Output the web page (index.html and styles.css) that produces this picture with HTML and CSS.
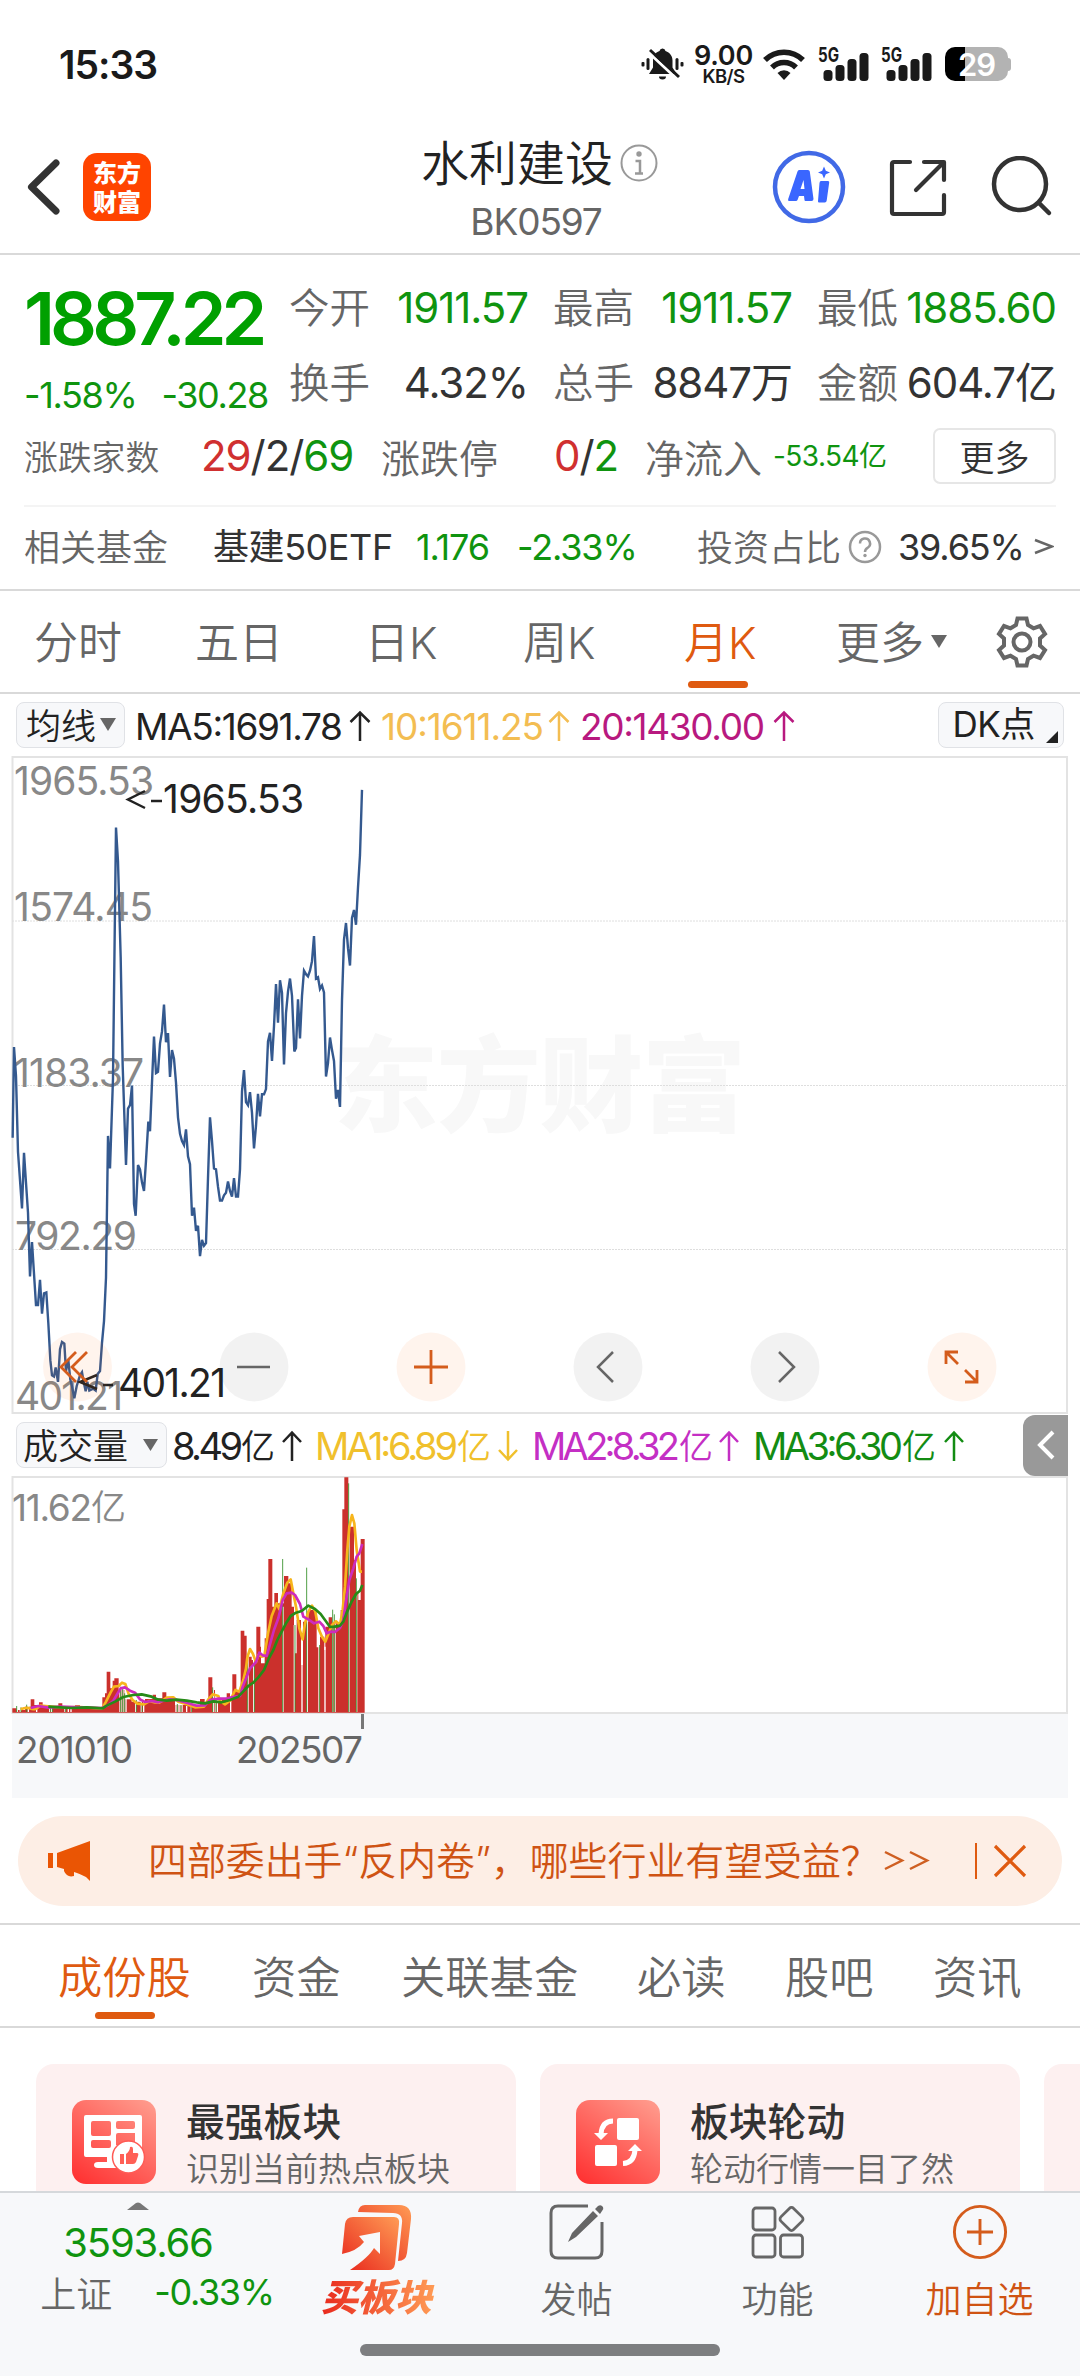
FILE: index.html
```html
<!DOCTYPE html>
<html lang="zh-CN">
<head>
<meta charset="utf-8">
<title>水利建设 BK0597</title>
<link rel="stylesheet" href="styles.css">
</head>
<body>
<div class="statusbar">
  <div class="clock n">15:33</div>
  <svg class="bell" width="43" height="34" viewBox="0 0 43 34"><g fill="#1a1a1a"><path d="M21.500 1.500a3 3 0 0 1 3 2.500c4.500 1.500 7 5 7 9.500v7l4 6.500H8l4-6.500v-7c0-4.500 2-8 6.500-9.500a3 3 0 0 1 3-2.500z"/><path d="M18 29.500h7a3.500 3 0 0 1-7 0z"/><rect x="0.500" y="15" width="3" height="4.500" rx="1"/><rect x="5.500" y="11" width="3" height="12" rx="1.500"/><rect x="34.500" y="11" width="3" height="12" rx="1.500"/><rect x="39.500" y="15" width="3" height="4.500" rx="1"/></g><path d="M7 5L36 32" stroke="#fff" stroke-width="3"/><path d="M9 3L38 30" stroke="#1a1a1a" stroke-width="3"/></svg>
  <div class="speed n"><b>9.00</b><i>KB/S</i></div>
  <svg class="wifi" width="42" height="32" viewBox="0 0 42 32"><g fill="none" stroke="#1a1a1a" stroke-width="5.500"><path d="M2 12a27 27 0 0 1 38 0"/><path d="M9 19.500a17 17 0 0 1 24 0"/></g><path d="M14.500 25a9 9 0 0 1 13 0L21 32z" fill="#1a1a1a"/></svg>
  <svg class="sig" width="52" height="40" viewBox="0 -4 52 40"><text x="1" y="16" class="g5" textLength="21" lengthAdjust="spacingAndGlyphs">5G</text><g fill="#1a1a1a"><rect x="6.500" y="24" width="9" height="11" rx="3.500"/><rect x="18.500" y="19" width="9" height="16" rx="3.500"/><rect x="30.500" y="13" width="9" height="22" rx="3.500"/><rect x="42.500" y="7" width="9" height="28" rx="3.500"/></g></svg>
  <svg class="sig" width="52" height="40" viewBox="0 -4 52 40"><text x="1" y="16" class="g5" textLength="21" lengthAdjust="spacingAndGlyphs">5G</text><g fill="#1a1a1a"><rect x="6.500" y="24" width="9" height="11" rx="3.500"/><rect x="18.500" y="19" width="9" height="16" rx="3.500"/><rect x="30.500" y="13" width="9" height="22" rx="3.500"/><rect x="42.500" y="7" width="9" height="28" rx="3.500"/></g></svg>
  <div class="battery"><span class="cell n">29</span><span class="nub"></span></div>
</div>

<header class="header">
  <svg class="back" width="40" height="64" viewBox="0 0 40 64"><path d="M32 8L7.500 32 32 56" fill="none" stroke="#333" stroke-width="7" stroke-linecap="round" stroke-linejoin="round"/></svg>
  <div class="logo"><span>东方</span><span>财富</span></div>
  <div class="title">
    <div class="name"><span>水利建设</span>
      <svg width="38" height="38" viewBox="0 0 38 38"><circle cx="19" cy="19" r="17.500" fill="none" stroke="#999" stroke-width="2"/><circle cx="19" cy="10" r="2.700" fill="#999"/><path d="M15.500 17H20V29.500M15 29.500H23" fill="none" stroke="#999" stroke-width="2.500"/></svg>
    </div>
    <div class="code n">BK0597</div>
  </div>
  <svg class="ai" width="74" height="74" viewBox="0 0 74 74"><circle cx="37" cy="37" r="34" fill="none" stroke="#4169e6" stroke-width="4.500"/><path fill="#3a66ff" fill-rule="evenodd" d="M27 20h9q1.500 0 1.800 1.500L41.500 49q0 2-2 2h-6q-1 0-1-1l-.5-4h-5l-1.500 4q-.5 1-1.500 1h-7q-1.500 0-.8-2L25.500 21.500Q26 20 27 20zM31.500 30l-3 9h4z"/><path fill="#3a66ff" d="M49 31h7q1.500 0 1.200 1.500l-2.500 18q-.2 2-2 2h-5.500q-1.500 0-1.200-1.500l1.500-18q.2-2 1.500-2z"/><path fill="#3a66ff" d="M52 16.500l1.800 4.200 4.200 1.800-4.200 1.800L52 28.500l-1.800-4.200-4.200-1.800 4.200-1.800z"/></svg>
  <svg class="share" width="64" height="64" viewBox="0 0 64 64"><g fill="none" stroke="#333" stroke-width="4.200" stroke-linecap="round" stroke-linejoin="round"><path d="M24 6H8Q6 6 6 8V56Q6 58 8 58H56Q58 58 58 56V39"/><path d="M38 6H58V24M57 7L30 34"/></g></svg>
  <svg class="find" width="64" height="64" viewBox="0 0 64 64"><circle cx="30" cy="28" r="26" fill="none" stroke="#333" stroke-width="4.500"/><path d="M49 47L59 57" stroke="#333" stroke-width="4.500" stroke-linecap="round"/></svg>
</header>

<section class="quote">
  <div class="top">
    <div class="last">
      <div class="price n">1887.22</div>
      <div class="chg n"><span>-1.58%</span><span>-30.28</span></div>
    </div>
    <div class="stats">
      <span class="k">今开</span><span class="v n down">1911.57</span>
      <span class="k">最高</span><span class="v n down">1911.57</span>
      <span class="k">最低</span><span class="v n down">1885.60</span>
      <span class="k">换手</span><span class="v n">4.32%</span>
      <span class="k">总手</span><span class="v n">8847万</span>
      <span class="k">金额</span><span class="v n">604.7亿</span>
    </div>
  </div>
  <div class="breadth">
    <span class="small">涨跌家数</span>
    <span class="v n"><em class="up">29</em>/2/<em class="down">69</em></span>
    <span class="mid">涨跌停</span>
    <span class="v n"><em class="up">0</em>/<em class="down">2</em></span>
    <span class="mid">净流入</span>
    <span class="flow n down">-53.54亿</span>
    <button class="more">更多</button>
  </div>
  <div class="fund">
    <span class="fk">相关基金</span>
    <span class="etf n">基建50ETF</span>
    <span class="n down">1.176</span>
    <span class="n down">-2.33%</span>
    <span class="fk">投资占比</span>
    <svg width="34" height="34" viewBox="0 0 34 34"><circle cx="17" cy="17" r="15" fill="none" stroke="#999" stroke-width="2.500"/><path d="M12 13.500a5 5 0 1 1 7.500 4.300Q17 19.300 17 22" fill="none" stroke="#999" stroke-width="2.500"/><circle cx="17" cy="25.500" r="1.700" fill="#999"/></svg>
    <span class="n pct">39.65%</span>
    <svg width="20" height="20" viewBox="0 0 20 20"><path d="M1 3L18 9.500 1 16" fill="none" stroke="#666" stroke-width="2.500"/></svg>
  </div>
</section>

<nav class="periods">
  <span>分时</span><span>五日</span><span>日<b>K</b></span><span>周<b>K</b></span><span class="on">月<b>K</b></span>
  <span>更多</span>
  <svg class="caret" width="16" height="14" viewBox="0 0 16 14"><path d="M0 0H16L8 13z" fill="#666"/></svg>
  <svg class="gear" width="56" height="56" viewBox="0 0 56 56"><g fill="none" stroke="#666" stroke-width="4"><path stroke-linejoin="miter" d="M23.500 4.500h9l1.500 6.500 5.500 3.300 6.500-2.300 5 8-5 4.500v7l5 4.500-5 8-6.500-2.300-5.500 3.300-1.500 6.500h-9l-1.500-6.500-5.500-3.300L10 44l-5-8 5-4.500v-7L5 20l5-8 6.500 2.300 5.500-3.300z"/><circle cx="28" cy="28" r="8.500"/></g></svg>
</nav>

<div class="ma">
  <span class="pill"><span>均线</span><svg width="16" height="14" viewBox="0 0 16 14"><path d="M0 0H16L8 13z" fill="#666"/></svg></span>
  <svg width="700" height="60" viewBox="130 694 700 60"><g class="num" font-size="37">
    <text x="135" y="739" fill="#222" textLength="208">MA5:1691.78</text>
    <text x="381" y="739" fill="#f3bd52" textLength="163">10:1611.25</text>
    <text x="580" y="739" fill="#b8197f" textLength="185">20:1430.00</text></g>
    <g fill="none" stroke-width="2.500"><path d="M360 740V712M350.500 721L360 711.500 369.500 721" stroke="#222"/><path d="M559 740V712M549.500 721L559 711.500 568.500 721" stroke="#f3bd52"/><path d="M784 740V712M774.500 721L784 711.500 793.500 721" stroke="#b8197f"/></g>
  </svg>
  <span class="pill dk"><span class="n">DK点</span><svg width="12" height="44" viewBox="0 0 12 44"><path d="M12 28V40H0z" fill="#222"/></svg></span>
</div>

<div class="chart">
  <svg class="plot" width="1080" height="658" viewBox="0 756 1080 658">
    <text class="wm" x="334" y="1124" font-size="104" textLength="412">东方财富</text>
    <g fill="none" stroke="#e3e3e3"><rect x="12.500" y="757" width="1054.500" height="656" stroke-width="2"/><path d="M12 921H1067M12 1085.500H1067M12 1249.500H1067" stroke-width="1" stroke="#dedede" stroke-dasharray="2 1"/></g>
    <g class="num" font-size="39" fill="#888"><text x="14" y="795" textLength="140">1965.53</text><text x="14" y="921" textLength="139">1574.45</text><text x="14" y="1087" textLength="130">1183.37</text><text x="15" y="1250" textLength="122">792.29</text><text x="15" y="1410" textLength="108">401.21</text></g>
    <polyline transform="translate(0 740) scale(.33333 .43367)" vector-effect="non-scaling-stroke" fill="none" stroke="#34598f" stroke-width="2.400" points="38,917 42,708 48,775 54,950 66,1080 72,952 84,1090 90,1237 96,1158 108,1303 114,1303 120,1245 126,1323 132,1276 139,1274 145,1345 151,1430 156,1465 162,1468 167,1447 174,1480 180,1405 186,1388 193,1392 198,1455 205,1430 211,1475 216,1490 223,1518 230,1490 240,1465 246,1458 251,1480 257,1502 262,1480 268,1500 280,1496 287,1500 293,1462 300,1455 306,1390 312,1340 318,1240 324,913 330,988 339,780 345,390 348,202 354,280 362,500 368,750 378,980 384,850 390,842 396,797 402,1070 407,1097 414,980 420,990 426,1020 432,1040 438,970 445,880 450,902 456,790 462,684 468,768 474,765 480,700 486,672 492,610 498,697 504,676 510,777 516,715 522,735 528,790 534,870 540,908 546,925 552,934 558,898 564,960 570,978 576,1097 582,1078 588,1132 594,1120 600,1190 606,1153 612,1166 618,1160 624,1010 630,870 636,925 642,988 648,990 654,1030 660,1062 666,1062 672,1050 678,1044 684,1018 690,1040 696,1053 702,1010 708,1053 714,1053 720,990 726,810 732,761 738,835 744,842 750,812 756,860 762,942 768,890 774,816 780,868 786,817 792,817 798,805 804,695 810,675 816,740 822,660 828,563 834,652 840,554 846,583 852,748 858,630 864,580 870,550 876,590 883,718 888,710 894,598 900,688 906,590 912,532 918,540 924,545 930,532 936,510 942,452 948,550 954,547 960,574 966,566 972,582 978,776 984,745 990,686 996,715 1002,740 1008,827 1014,807 1020,846 1026,600 1032,460 1038,422 1044,480 1050,520 1056,410 1062,392 1068,426 1074,340 1080,265 1086,115"/>
    <g fill="none" stroke="#222" stroke-width="2.500"><path d="M145 791L128 799.500 145 808M151 801H162M97 1375L80 1382 97 1389M103 1385H113"/></g>
    <g class="num" font-size="39" fill="#222"><text x="163" y="813" textLength="141">1965.53</text><text x="118" y="1397" textLength="108">401.21</text></g>
    <g fill-opacity=".07"><circle cx="77.500" cy="1367" r="34.500" fill="#f60"/><circle cx="431" cy="1367" r="34.500" fill="#f60"/><circle cx="962" cy="1367" r="34.500" fill="#f60"/></g>
    <g fill-opacity=".05"><circle cx="254" cy="1367" r="34.500"/><circle cx="608" cy="1367" r="34.500"/><circle cx="785" cy="1367" r="34.500"/></g>
    <g fill="none" stroke="#d45c1c" stroke-width="2.800"><path d="M76 1352L61 1367 76 1382M87 1352L72 1367 87 1382M431 1350V1384M414 1367H448"/><path d="M946 1364V1352H958M947 1353L958 1364M965 1370L976 1381M977 1370V1382H965"/></g>
    <g fill="none" stroke="#666" stroke-width="2.500"><path d="M237 1367H270M613 1352L598 1367 613 1382M779 1352L794 1367 779 1382"/></g>
  </svg>
  <div class="volhead">
    <span class="pill vol"><span>成交量</span><svg width="15" height="13" viewBox="0 0 15 13"><path d="M0 0H15L7.500 12z" fill="#666"/></svg></span>
    <svg width="820" height="62" viewBox="170 1414 820 62"><g class="num" font-size="38">
      <text x="172" y="1460" fill="#222" textLength="71">8.49</text><text x="315" y="1460" fill="#f0c02c" textLength="143">MA1:6.89</text><text x="532" y="1460" fill="#c42fc4" textLength="148">MA2:8.32</text><text x="753" y="1460" fill="#138c13" textLength="150">MA3:6.30</text></g>
      <g class="cjk" font-size="34"><text x="241" y="1459" fill="#222">亿</text><text x="457" y="1459" fill="#f0c02c">亿</text><text x="679" y="1459" fill="#c42fc4">亿</text><text x="902" y="1459" fill="#138c13">亿</text></g>
      <g fill="none" stroke-width="2.500"><path d="M292 1461V1433M283 1442L292 1432.500 301 1442" stroke="#222"/><path d="M508 1431V1459M499 1450L508 1459.500 517 1450" stroke="#f0c02c"/><path d="M729 1461V1433M720 1442L729 1432.500 738 1442" stroke="#c42fc4"/><path d="M954 1461V1433M945 1442L954 1432.500 963 1442" stroke="#138c13"/></g>
    </svg>
    <button class="side"><svg width="20" height="32" viewBox="0 0 20 32"><path d="M17 3L4 16 17 29" fill="none" stroke="#fff" stroke-width="4"/></svg></button>
  </div>
  <svg class="plot" width="1080" height="322" viewBox="0 1476 1080 322">
    <rect x="12" y="1714" width="1056" height="84" fill="#f7f8fa"/>
    <rect x="12.500" y="1477" width="1054.500" height="236" fill="none" stroke="#e3e3e3" stroke-width="2"/>
    <text class="num" x="12" y="1521" font-size="37" fill="#888" textLength="80">11.62</text><text class="cjk" x="91" y="1520" font-size="35" fill="#888">亿</text>
    <g transform="translate(0 1460) scale(.33333)">
      <path fill="#cb302c" d="M37 758V745H50V750H75V740H92V718H103V735H117V727H128V738H175V730H187V738H225V736H240V742H307V712H315V700H320V635H331V685H338V662H343V655H356V690H375V718H395V725H435V717H458V704H468V715H487V697H499V712H525V735H600V717H614V730H625V652H637V690H645V725H665V720H680V700H690V715H697V643H709V690H722V512H733V527H740V590H755V600H769V500H781V560H783V610H794V535H800V417H805V297H817V440H823V399H834V430H852V348H865V370H875V440H882V495H885V580H890V480H903V615H909V485H925V450H950V562H960V530H973V570H976V500H986V472H997V490H1022V450H1027V148H1033V52H1045V200H1062V300H1068V400H1075V420H1082V237H1094V758Z"/>
      <path stroke="#fff" stroke-width="4" d="M52 738V756M61 738V756M85 738V756M110 738V756M149 738V756M155 738V756M195 738V756M205 738V756M213 738V756M360 690V756M366 690V756M372 690V756M378 700V756M407 720V756M424 720V756M431 720V756M528 730V756M534 730V756M540 730V756M546 730V756M560 738V756M574 738V756M640 690V756M646 700V756M652 715V756M692 712V756M744 590V756M761 600V756M849 440V756M883 495V756M906 612V756M922 450V756M957 560V756M975 560V756M998 470V756M1005 490V756M1047 200V756M1070 390V756"/>
      <path stroke="#2c8a20" stroke-width="2.500" d="M50 738V756M63 742V756M80 734V756M151 740V756M157 740V756M197 740V756M362 680V756M368 685V756M374 700V756M409 720V756M426 728V756M532 732V756M543 736V756M575 740V756M638 682V756M648 715V756M742 600V756M763 605V756M848 297V756M885 495V756M920 323V756M959 555V756M998 449V756M1003 463V756M1046 70V756M1069 355V756"/>
      <g fill="none" stroke-width="8" stroke-linejoin="round"><path stroke="#f7b51c" d="M62 748Q80 740 92 746T120 737L180 742 240 741 306 746 318 725 332 697 342 680 356 678 366 668 376 672 386 702 398 720 412 731 432 733 448 723 465 727 478 728 500 713 520 712 535 725 560 733 585 742 612 740 625 718 638 703 655 708 660 723 675 733 690 722 706 690 718 695 730 660 738 625 742 592 750 567 758 580 768 606 775 585 785 590 793 588 804 520 815 468 830 430 838 448 850 400 862 368 872 358 880 400 888 440 898 505 908 538 915 490 925 455 936 437 946 455 955 505 966 530 976 545 986 520 996 495 1008 484 1020 495 1028 450 1035 380 1042 270 1048 200 1056 165 1063 190 1070 270 1080 335 1086 335"/><path stroke="#cd2bbd" d="M92 744L115 738 145 743 180 740 240 742 306 744 325 735 340 722 350 705 362 685 375 682 390 692 405 698 420 718 435 726 455 723 475 727 490 722 510 718 530 720 560 728 590 737 615 736 630 720 655 716 680 716 705 710 720 708 728 680 740 650 750 625 768 606 778 578 788 586 800 588 808 560 822 510 835 475 848 420 860 400 875 398 885 405 900 432 910 470 925 478 942 490 958 485 970 498 980 520 992 515 1005 516 1020 504 1030 480 1040 410 1048 360 1060 325 1070 290 1078 280 1087 252"/><path stroke="#278b18" d="M145 740L180 742 215 744 260 742 308 745 320 737 345 725 370 711 400 705 425 703 455 710 475 719 500 722 530 719 560 722 590 727 615 730 640 724 665 727 690 720 715 710 732 692 745 678 760 668 775 652 792 630 808 592 820 570 832 540 845 515 858 490 872 468 888 458 905 453 925 437 945 447 962 462 975 480 990 501 1005 500 1020 497 1030 485 1040 458 1055 425 1068 402 1080 392 1087 375"/></g>
    </g>
    <rect x="361" y="1714" width="3" height="15" fill="#777"/>
    <g class="num" font-size="37" fill="#666"><text x="16" y="1763" textLength="117">201010</text><text x="236" y="1763" textLength="127">202507</text></g>
  </svg>
</div>

<div class="notice">
  <svg width="46" height="40" viewBox="0 0 46 40"><path fill="#ea5504" d="M0 12H5V27H0zM9 12L42 0V40L38 36Q30 32 26 31V35Q19 37 16 30V28L9 26z"/></svg>
  <span class="msg">四部委出手<q>“</q>反内卷<q>”</q>，哪些行业有望受益？</span>
  <svg class="gg" width="50" height="24" viewBox="0 0 50 24"><path d="M2 3L19 11.500 2 20M27 3L44 11.500 27 20" fill="none" stroke="#cf5f22" stroke-width="2.500"/></svg>
  <i class="bar"></i>
  <svg width="34" height="34" viewBox="0 0 34 34"><path d="M2 2L32 32M32 2L2 32" stroke="#df5a10" stroke-width="3.200"/></svg>
</div>

<nav class="sections">
  <span class="on">成份股</span><span>资金</span><span>关联基金</span><span>必读</span><span>股吧</span><span>资讯</span>
</nav>

<div class="cards">
  <article class="card">
    <svg width="84" height="84" viewBox="0 0 84 84"><defs><linearGradient id="r" x1="0.150" y1="1" x2="0.850" y2="0"><stop offset="0" stop-color="#ff3434"/><stop offset="1" stop-color="#ff988a"/></linearGradient></defs><rect width="84" height="84" rx="14" fill="url(#r)"/><path fill="#fff" fill-rule="evenodd" d="M14 15H68Q70 15 70 17V56H43V62H50V68H26Q22 68 22 65T26 62H35V57H14Q12 57 12 55V17Q12 15 14 15zM21 21Q19 21 19 23V34Q19 36 21 36H37Q39 36 39 34V23Q39 21 37 21zM21 40Q19 40 19 42V46Q19 48 21 48H37Q39 48 39 46V42Q39 40 37 40zM46 21Q44 21 44 23V27Q44 29 46 29H61Q63 29 63 27V23Q63 21 61 21zM46 33Q44 33 44 35V45H63V33z"/><circle cx="56.500" cy="57" r="16" fill="#fff" stroke="#ff5b55" stroke-width="1.500"/><path fill="#ff6056" d="M48 54H52V64H48zM54 54Q58 51 58 47Q61 46 61 49V53H65Q67 53 66 56L64 62Q63 64 61 64H54z"/></svg>
    <div><h3>最强板块</h3><p>识别当前热点板块</p></div>
  </article>
  <article class="card">
    <svg width="84" height="84" viewBox="0 0 84 84"><rect width="84" height="84" rx="14" fill="url(#r)"/><g fill="#fff"><rect x="41" y="18" width="22" height="22" rx="2"/><rect x="19" y="45" width="22" height="21" rx="2"/><path d="M18 33H32L25 40zM52 51H66L59 44z"/></g><path d="M37 21Q26 21 25 34M47 63.500Q58 63 59 50" fill="none" stroke="#fff" stroke-width="5"/></svg>
    <div><h3>板块轮动</h3><p>轮动行情一目了然</p></div>
  </article>
  <article class="card"></article>
</div>

<footer class="dock">
  <div class="index">
    <svg width="22" height="8" viewBox="0 0 22 8"><path d="M0 8L9 1Q11 0 13 1L22 8z" fill="#777"/></svg>
    <div class="pt n down">3593.66</div>
    <div class="sub"><span>上证</span><span class="n down">-0.33%</span></div>
  </div>
  <div class="act buy">
    <svg width="72" height="66" viewBox="0 0 72 66"><defs><linearGradient id="b" x1="0" y1="1" x2="1" y2="0"><stop offset="0" stop-color="#e8261c"/><stop offset="1" stop-color="#ff9c55"/></linearGradient></defs><path fill="url(#b)" d="M17 8Q18 1 24 1H58Q71 1 70 15L66 49Q65 57 57 57L61 19Q62 9 52 9z"/><path fill="url(#b)" d="M12 13H53Q59 13 58 20L54 60Q53 66 48 66H9Q28 53 33 44L39 50V28L18 32 23 38Q16 47 1 50L4 20Q5 13 12 13z"/></svg>
    <span>买板块</span>
  </div>
  <div class="act">
    <svg width="56" height="56" viewBox="0 0 56 56"><g fill="none" stroke="#666" stroke-width="3"><path d="M39 2H9Q2 2 2 9V47Q2 54 9 54H46Q53 54 53 47V18"/></g><path d="M44 7L49 12 27 33 19 38 23 29zM46 5L49 2Q52 0 54 3 55 5 53 7L51 10z" fill="#666"/></svg>
    <span>发帖</span>
  </div>
  <div class="act">
    <svg width="56" height="56" viewBox="0 0 56 56"><g fill="none" stroke="#666" stroke-width="2.800"><rect x="3" y="4" width="22" height="22" rx="3"/><rect x="3" y="31" width="22" height="22" rx="3"/><rect x="30.500" y="31" width="22" height="22" rx="3"/><rect x="32.500" y="6" width="18" height="18" rx="3" transform="rotate(45 41.500 15)"/></g></svg>
    <span>功能</span>
  </div>
  <div class="act add">
    <svg width="58" height="58" viewBox="0 0 58 58"><g fill="none" stroke="#d45c1c" stroke-width="3"><circle cx="29" cy="29" r="26.500"/><path d="M29 15.500V42.500M15.500 29H42.500"/></g></svg>
    <span>加自选</span>
  </div>
  <i class="home"></i>
</footer>
</body>
</html>
```
FILE: styles.css
```css
* { box-sizing: border-box; }
body {
  margin: 0;
  width: 1080px;
  height: 2376px;
  overflow: hidden;
  background: #fff;
  color: #333;
  font-family: "Noto Sans CJK SC", sans-serif;
  font-weight: 350;
  display: flex;
  flex-direction: column;
  white-space: nowrap;
}
svg { display: block; flex: none; }
em, i { font-style: normal; }
button { font: inherit; color: inherit; border: 0; padding: 0; background: none; }
.n, .num { font-family: Inter, "Noto Sans CJK SC", sans-serif; font-weight: 375; }
.n { letter-spacing: -0.038em; }
.cjk { font-family: "Noto Sans CJK SC", sans-serif; font-weight: 350; }
.down { color: #0f940f; }
.up { color: #d03030; }

/* status bar */
.statusbar { height: 128px; display: flex; align-items: center; padding-left: 59px; flex: none; }
.clock { font-size: 39px; font-weight: 600; width: 582px; color: #1a1a1a; letter-spacing: -0.025em; }
.bell { margin-right: 9px; }
.speed { width: 61px; margin-right: 9px; display: flex; flex-direction: column; align-items: center; color: #1a1a1a; }
.speed b { font-size: 27px; line-height: 23px; font-weight: 600; letter-spacing: -0.01em; }
.speed i { font-size: 18.5px; line-height: 18px; font-weight: 600; }
.wifi { margin-right: 12px; }
.sig { margin: -4px 11px 0 0; }
.g5 { font: 700 20px Inter, sans-serif; fill: #1a1a1a; }
.battery { display: flex; align-items: center; margin-left: 2px; }
.cell { width: 63px; height: 34px; border-radius: 10px; background: linear-gradient(90deg, #000 20px, #b3b3b3 20px); color: #fff; font-size: 31px; font-weight: 600; line-height: 35px; text-align: center; }
.nub { width: 3px; height: 13px; background: #b3b3b3; border-radius: 0 3px 3px 0; }

/* header */
.header { height: 127px; border-bottom: 2px solid #d9d9d9; display: flex; align-items: flex-start; flex: none; }
.back { margin: 27px 0 0 24px; }
.logo { margin: 25px 0 0 19px; width: 68px; height: 68px; border-radius: 14px; background: #ff4400; color: #fff; font-weight: 900; font-size: 24px; line-height: 28.500px; text-align: center; padding-top: 5px; display: flex; flex-direction: column; }
.title { width: 350px; margin: 1px 0 0 208px; display: flex; flex-direction: column; align-items: center; }
.name { display: flex; align-items: center; font-size: 48px; line-height: 62px; color: #222; margin-right: -11px; }
.name svg { margin: 5px 0 0 7px; }
.code { font-size: 37px; line-height: 54px; color: #666; margin: 4px -4px 0 0; letter-spacing: -0.03em; }
.ai { margin: 22px 0 0 63px; }
.share { margin: 28px 0 0 40px; }
.find { margin: 28px 0 0 40px; }

/* quote */
.quote { height: 336px; padding: 16px 24px 0; border-bottom: 2px solid #d9d9d9; flex: none; }
.top { display: flex; height: 150px; }
.last { width: 265px; }
.price { font-size: 73.500px; line-height: 96px; font-weight: 600; color: #00a000; letter-spacing: -0.068em; }
.chg { display: flex; gap: 25px; font-size: 36px; line-height: 56px; color: #0f940f; }
.stats { display: grid; grid-template-columns: 81px 158px 106px 158px 106px 158px; grid-template-rows: 75px 75px; line-height: 73px; width: 767px; }
.k { color: #666; font-size: 40.500px; line-height: 69px; justify-self: end; }
.v { font-size: 42px; letter-spacing: -0.025em; }
.stats .v { justify-self: end; }
.breadth { display: grid; grid-template-columns: 177px 180px 173px 91px 128px 160px 123px; height: 72px; line-height: 70px; align-items: center; }
.small { font-size: 33.800px; color: #666; padding-bottom: 2px; }
.mid { font-size: 39px; color: #666; padding-bottom: 2px; }
.flow { font-size: 28px; letter-spacing: -0.02em; }
.breadth .v, .flow { margin-top: -2px; }
.more { height: 56px; border: 2px solid #e6e6e6; border-radius: 7px; font-size: 35px; line-height: 46px; margin-top: -3px; }
.fund { border-top: 2px solid #f4f4f4; margin-top: 12px; height: 82px; display: grid; grid-template-columns: 189px 203px 101px 180px 151px 50px 136px 20px; align-items: center; font-size: 36px; line-height: 76px; padding-bottom: 3px; }
.fk { color: #666; padding-bottom: 4px; }
.fund .n { padding-bottom: 1px; letter-spacing: -0.032em; }
.fund .etf { letter-spacing: -0.012em; }

/* period tabs */
.periods { height: 103px; border-bottom: 2px solid #d9d9d9; display: grid; grid-template-columns: 161px 170px 158px 161px 152px 95px 63px 56px; padding-left: 34px; font-size: 44px; color: #666; line-height: 98px; align-items: start; flex: none; }
.periods svg { align-self: center; }
.periods b { font-family: Inter, sans-serif; font-weight: 350; }
.periods .on { color: #df5a10; position: relative; }
.on::after { content: ""; position: absolute; width: 60px; height: 7px; border-radius: 4px; background: #df5a10; bottom: 4px; left: 4px; }

/* chart */
.ma { height: 62px; padding: 0 16px; display: flex; align-items: center; flex: none; }
.pill { height: 46px; display: flex; align-items: center; justify-content: space-between; background: #f7f8fa; border: 1.500px solid #e0e2e6; border-radius: 8px; padding: 0 8px 0 9px; font-size: 35px; line-height: 42px; color: #222; width: 109px; }
.pill > span { margin-top: -2px; }
.ma > svg { margin-left: 5px; }
.dk { width: 127px; margin-left: 108px; padding: 0 5px 0 14px; }
.dk .n { letter-spacing: -0.015em; margin-right: -10px; }
.chart { height: 1042px; flex: none; }
.wm { font-family: "Noto Sans CJK SC", sans-serif; font-weight: 900; fill: #f8f8f8; }
.volhead { height: 62px; padding-left: 16px; display: flex; align-items: center; }
.vol { width: 151px; padding: 0 8px 0 6px; margin-right: 3px; }
.side { margin-left: 33px; width: 45px; height: 61px; background: #999; border-radius: 12px 0 0 12px; display: flex; align-items: center; justify-content: center; }

/* notice */
.notice { margin: 18px 18px 17px; height: 90px; border-radius: 45px; background: #fdeee5; color: #cf5313; display: flex; align-items: center; padding-left: 30px; flex: none; font-size: 38.900px; }
.msg { width: 735px; margin: -6px 0 0 54px; }
.msg q { font-family: Inter, sans-serif; quotes: none; }
.bar { width: 1.500px; height: 36px; background: #df5a10; margin: 0 16px 0 42px; }

/* section tabs */
.sections { height: 105px; border-top: 2px solid #d9d9d9; border-bottom: 2px solid #d9d9d9; display: grid; grid-template-columns: 194px 149px 236px 148px 148px 90px; padding-left: 58px; font-size: 44.300px; line-height: 100px; color: #666; flex: none; }
.sections .on { color: #df5a10; position: relative; }
.sections .on::after { left: 37px; bottom: 7px; }

/* cards */
.cards { height: 163px; padding: 36px 0 0 36px; display: flex; gap: 24px; overflow: hidden; flex: none; }
.card { width: 480px; flex: none; height: 160px; background: #fdf0f0; border-radius: 18px; padding: 36px; display: flex; gap: 30px; }
.card h3 { margin: -3px 0 0; font-size: 38.800px; line-height: 45px; font-weight: 500; }
.card p { margin: 1px 0 0; font-size: 33px; line-height: 48px; color: #666; }

/* bottom dock */
.dock { background: #f7f8fa; border-top: 2px solid #d5d8db; display: grid; grid-template-columns: 276px 201px 199px 203px 201px; position: relative; flex: 1; }
.index { display: flex; flex-direction: column; align-items: center; padding-top: 9px; }
.pt { font-size: 40px; line-height: 48px; margin-top: 9px; letter-spacing: -0.03em; }
.sub { display: flex; gap: 42px; line-height: 50px; font-size: 36px; padding-left: 38px; color: #666; }
.act { display: flex; flex-direction: column; align-items: center; font-size: 36px; color: #666; padding-top: 11px; }
.act span { line-height: 48px; margin-top: 13px; }
.act svg { height: 56px; overflow: visible; }
.act.buy svg { height: 66px; }
.act.buy span { margin-top: 1px; padding: 0 4px; font-size: 37px; font-weight: 900; font-style: italic; background: linear-gradient(90deg, #e8261c, #ff9c55); -webkit-background-clip: text; background-clip: text; color: transparent; }
.act.add, .act.add span { color: #cf5313; }
.home { position: absolute; left: 360px; top: 151px; width: 360px; height: 12px; border-radius: 6px; background: #7d7e80; }
```
